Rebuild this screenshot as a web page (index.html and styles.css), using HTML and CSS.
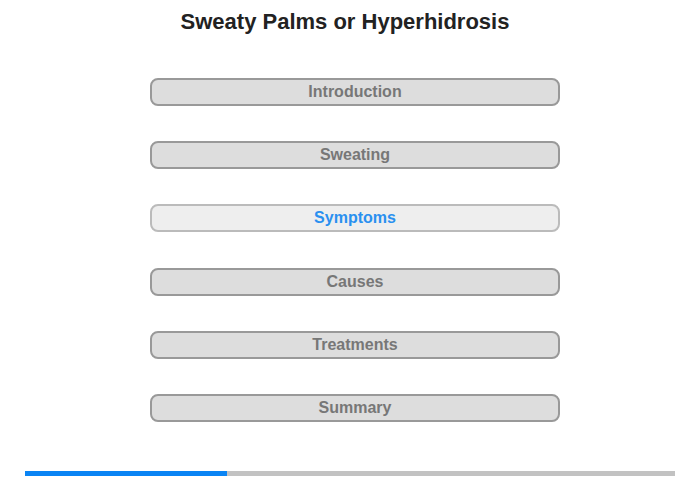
FILE: index.html
```html
<!DOCTYPE html>
<html lang="en">
<head>
    <meta charset="UTF-8">
    <title>Sweaty Palms or Hyperhidrosis</title>
    <link rel="stylesheet" href="styles.css">
</head>
<body>
    <div class="page">
        <h1>Sweaty Palms or Hyperhidrosis</h1>
        <div class="menu">
            <button class="item">Introduction</button>
            <button class="item">Sweating</button>
            <button class="item active">Symptoms</button>
            <button class="item">Causes</button>
            <button class="item">Treatments</button>
            <button class="item">Summary</button>
        </div>
        <div class="progress">
            <div class="progress-fill" style="width: 31%"></div>
        </div>
    </div>
</body>
</html>
```

FILE: styles.css
```css
body {
    margin: 0;
    font-family: 'Liberation Sans', Arial, sans-serif;
    background: #fff;
}

.page {
    width: 700px;
    height: 480px;
    display: flex;
    flex-direction: column;
    align-items: center;
}

h1 {
    margin: 9px 10px 0 0;
    font-size: 22px;
    line-height: 26px;
    color: #222;
    font-weight: bold;
}

.menu {
    display: flex;
    flex-direction: column;
    gap: 35.2px;
    margin-top: 43px;
    margin-left: 10px;
}

.item {
    width: 410px;
    height: 28px;
    padding: 0;
    background: #ddd;
    border: 2px solid #999;
    border-radius: 8px;
    color: #777;
    font-family: 'Liberation Sans', Arial, sans-serif;
    font-size: 16px;
    font-weight: bold;
    cursor: pointer;
}

.item.active {
    background: #eee;
    border-color: #bbb;
    color: #2a90f0;
}

.progress {
    margin-top: auto;
    margin-bottom: 4px;
    width: 650px;
    height: 5px;
    background: #c2c2c2;
}

.progress-fill {
    height: 100%;
    background: #0a84f4;
}
```
